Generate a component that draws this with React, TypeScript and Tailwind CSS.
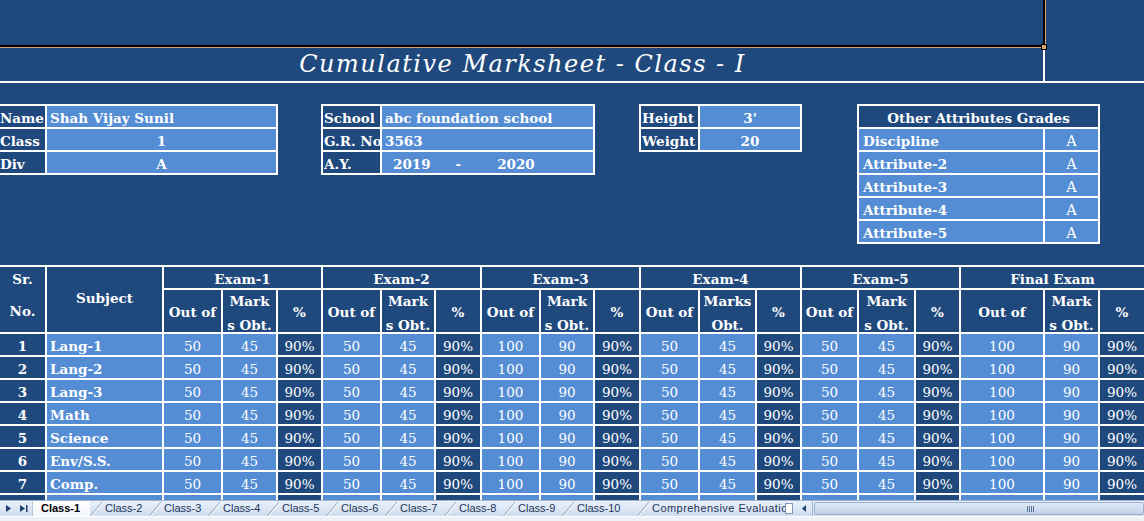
import React from "react";

const DARK = "bg-[#1F497D]";
const LIGHT = "bg-[#548DD4]";

type CP = { className?: string; children?: React.ReactNode };

function Cell({ className = "", children }: CP) {
  return (
    <div
      className={`h-[21px] overflow-hidden whitespace-nowrap leading-[21px] pt-[2px] ${className}`}
    >
      {children}
    </div>
  );
}

const subjects = ["Lang-1", "Lang-2", "Lang-3", "Math", "Science", "Env/S.S.", "Comp."];
const exams = [
  ["50", "45"],
  ["50", "45"],
  ["100", "90"],
  ["50", "45"],
  ["50", "45"],
  ["100", "90"],
];
const examNames = ["Exam-1", "Exam-2", "Exam-3", "Exam-4", "Exam-5", "Final Exam"];
const spanCls = [
  "col-start-3 col-span-3",
  "col-start-6 col-span-3",
  "col-start-9 col-span-3",
  "col-start-12 col-span-3",
  "col-start-15 col-span-3",
  "col-start-18 col-span-3",
];

function InfoTable({
  rows,
  cols,
  noLeft,
  className = "",
}: {
  rows: { label: string; value: React.ReactNode; vCls?: string; lCls?: string }[];
  cols: string;
  noLeft?: boolean;
  className?: string;
}) {
  return (
    <div
      className={`grid bg-white gap-[2px] pt-[2px] pr-[2px] pb-[2px] ${noLeft ? "" : "pl-[2px]"} ${cols} ${className}`}
    >
      {rows.map((r, i) => (
        <React.Fragment key={i}>
          <Cell className={`${DARK} font-bold ${r.lCls ?? ""}`}>{r.label}</Cell>
          <Cell className={`${LIGHT} font-bold ${r.vCls ?? ""}`}>{r.value}</Cell>
        </React.Fragment>
      ))}
    </div>
  );
}

function Slant() {
  return (
    <svg width="13" height="15" viewBox="0 0 13 15" className="shrink-0">
      <line x1="0.5" y1="15" x2="12" y2="1" stroke="#8a9cb8" strokeWidth="1" />
      <line x1="1.8" y1="15" x2="12.8" y2="1.6" stroke="#ffffff" strokeWidth="1" />
    </svg>
  );
}

export default function App() {
  const tabs = ["Class-2", "Class-3", "Class-4", "Class-5", "Class-6", "Class-7", "Class-8", "Class-9"];
  return (
    <div className="w-[1144px] h-[521px] overflow-hidden bg-[#1F497D] text-white font-['DejaVu_Serif','Liberation_Serif',serif] text-[13.5px] flex flex-col">
      <div className="h-[500px] flex flex-col shrink-0 overflow-hidden">
        {/* top band */}
        <div className="relative flex h-[48px] shrink-0">
          <div className="w-[1043px] flex flex-col">
            <div className="flex-1" />
            <div className="h-[2px] bg-black" />
            <div className="h-[1px] bg-[#D9A56B]" />
          </div>
          <div className="w-[2px] h-[47px] bg-black" />
          <div className="w-[1px] h-[45px] bg-[#D9A56B]" />
          <div className="absolute left-[1041px] top-[44px] w-[6px] h-[6px] border border-black bg-[#D9A56B]" />
        </div>
        {/* title */}
        <div className="flex h-[33px] shrink-0">
          <div className="w-[1043px] flex items-center justify-center">
            <span className="italic text-[24px] tracking-[1.5px] leading-[33px] font-['DejaVu_Serif',serif] pl-[2px]">
              Cumulative Marksheet - Class - I
            </span>
          </div>
          <div className="w-[2px] bg-white" />
          <div className="flex-1" />
        </div>
        <div className="h-[2px] bg-white shrink-0" />
        {/* info section */}
        <div className="h-[182px] shrink-0 flex items-start pt-[21px]">
          <InfoTable
            noLeft
            cols="grid-cols-[45px_229px]"
            rows={[
              { label: "Name", value: "Shah Vijay Sunil", vCls: "pl-[3px]" },
              { label: "Class", value: "1", vCls: "text-center" },
              { label: "Div", value: "A", vCls: "text-center" },
            ]}
          />
          <InfoTable
            className="ml-[43px]"
            cols="grid-cols-[57px_211px]"
            rows={[
              { label: "School", value: "abc foundation school", vCls: "pl-[3px]", lCls: "pl-[1px]" },
              { label: "G.R. No", value: "3563", vCls: "pl-[3px]", lCls: "pl-[1px]" },
              {
                label: "A.Y.",
                lCls: "pl-[1px]",
                value: (
                  <span className="flex pl-[11px]">
                    <span>2019</span>
                    <span className="ml-[25px]">-</span>
                    <span className="ml-[36px]">2020</span>
                  </span>
                ),
              },
            ]}
          />
          <InfoTable
            className="ml-[44px]"
            cols="grid-cols-[57px_100px]"
            rows={[
              { label: "Height", value: "3'", vCls: "text-center", lCls: "pl-[1px]" },
              { label: "Weight", value: "20", vCls: "text-center", lCls: "pl-[1px]" },
            ]}
          />
          <div className="ml-[55px] grid grid-cols-[184px_53px] bg-white gap-[2px] p-[2px]">
            <Cell className={`${DARK} font-bold col-span-2 text-center`}>Other Attributes Grades</Cell>
            {["Discipline", "Attribute-2", "Attribute-3", "Attribute-4", "Attribute-5"].map((a) => (
              <React.Fragment key={a}>
                <Cell className={`${LIGHT} font-bold pl-[4px]`}>{a}</Cell>
                <Cell className={`${LIGHT} text-center text-[14.5px]`}>A</Cell>
              </React.Fragment>
            ))}
          </div>
        </div>
        {/* main table */}
        <div className="flex-1 overflow-hidden">
          <div className="w-[1144px] grid bg-white gap-[2px] pt-[2px] grid-cols-[45px_115px_57px_53px_43px_57px_52px_44px_57px_52px_44px_57px_55px_43px_55px_55px_43px_82px_53px_44px] grid-rows-[21px_42px_repeat(8,21px)]">
            <div className={`${DARK} row-span-2 col-start-1 row-start-1 font-bold flex flex-col items-center justify-center leading-[20px] gap-[12px] pb-[10px]`}>
              <span>Sr.</span>
              <span>No.</span>
            </div>
            <div className={`${DARK} row-span-2 col-start-2 row-start-1 font-bold flex items-center justify-center pb-[3px]`}>
              Subject
            </div>
            {examNames.map((n, i) => (
              <Cell key={n} className={`${DARK} ${spanCls[i]} row-start-1 font-bold text-center`}>
                {n}
              </Cell>
            ))}
            {examNames.map((n, i) => (
              <React.Fragment key={n + "h"}>
                <div className={`${DARK} row-start-2 font-bold flex items-center justify-center pt-[2px] whitespace-nowrap overflow-hidden`}>
                  Out of
                </div>
                <div className={`${DARK} row-start-2 h-[42px] font-bold flex flex-col items-center justify-center leading-[24px] pt-[4px] whitespace-nowrap overflow-hidden`}>
                  {i === 3 ? (
                    <>
                      <span>Marks</span>
                      <span>Obt.</span>
                    </>
                  ) : (
                    <>
                      <span>Mark</span>
                      <span>s Obt.</span>
                    </>
                  )}
                </div>
                <div className={`${DARK} row-start-2 font-bold flex items-center justify-center pt-[3px]`}>%</div>
              </React.Fragment>
            ))}
            {subjects.map((s, r) => (
              <React.Fragment key={s}>
                <Cell className={`${DARK} font-bold text-center`}>{r + 1}</Cell>
                <Cell className={`${LIGHT} font-bold pl-[3px]`}>{s}</Cell>
                {exams.map((e, i) => (
                  <React.Fragment key={i}>
                    <Cell className={`${LIGHT} text-center`}>{e[0]}</Cell>
                    <Cell className={`${LIGHT} text-center`}>{e[1]}</Cell>
                    <Cell className={`${DARK} text-center`}>90%</Cell>
                  </React.Fragment>
                ))}
              </React.Fragment>
            ))}
            <Cell className={DARK} />
            <Cell className={LIGHT} />
            {exams.map((e, i) => (
              <React.Fragment key={"b" + i}>
                <Cell className={LIGHT} />
                <Cell className={LIGHT} />
                <Cell className={DARK} />
              </React.Fragment>
            ))}
          </div>
        </div>
      </div>
      {/* sheet tab bar */}
      <div className="h-[21px] shrink-0 flex flex-col font-['Liberation_Sans',Arial,sans-serif] text-[11px]">
        <div className="h-[16px] flex border-t border-[#9db3d0] bg-gradient-to-b from-[#eaf1fb] to-[#cfdcef]">
          <div className="w-[33px] shrink-0 flex items-center pl-[6px] gap-[9px] border-r border-[#b5c6de]">
            <svg width="5" height="7" viewBox="0 0 5 7">
              <path d="M0 0 L5 3.5 L0 7 Z" fill="#1d3f6e" />
            </svg>
            <svg width="8" height="7" viewBox="0 0 8 7">
              <path d="M0 0 L5 3.5 L0 7 Z" fill="#1d3f6e" />
              <rect x="6" y="0" width="1.5" height="7" fill="#1d3f6e" />
            </svg>
          </div>
          <div className="w-[752px] shrink-0 flex overflow-hidden">
            <div className="w-[57px] shrink-0 bg-gradient-to-b from-white to-[#f3f6fb] font-bold text-black pl-[8px] leading-[15px]">
              Class-1
            </div>
            {tabs.map((t) => (
              <div key={t} className="w-[59px] shrink-0 flex text-[#1e3556] leading-[15px]">
                <Slant />
                <span className="pl-[2px]">{t}</span>
              </div>
            ))}
            <div className="w-[75px] shrink-0 flex text-[#1e3556] leading-[15px]">
              <Slant />
              <span className="pl-[2px]">Class-10</span>
            </div>
            <div className="shrink-0 flex text-[#1e3556] leading-[15px] whitespace-nowrap">
              <Slant />
              <span className="pl-[2px] tracking-[0.45px]">Comprehensive Evaluation</span>
            </div>
          </div>
          <div className="w-[8px] shrink-0 bg-white border border-[#7f95b5] my-[2px]" />
          <div className="w-[18px] shrink-0 flex items-center justify-center ml-[2px] border-r border-[#9fb2cd]">
            <svg width="4" height="7" viewBox="0 0 4 7">
              <path d="M4 0 L0 3.5 L4 7 Z" fill="#1d3f6e" />
            </svg>
          </div>
          <div className="flex-1 flex items-center bg-gradient-to-b from-[#dde8f6] to-[#c0d2ea] border border-[#9fb2cd] rounded-[2px] my-[1px] ml-[1px] pl-[212px]">
            <div className="flex gap-[1px]">
              {[0, 1, 2, 3].map((k) => (
                <div key={k} className="w-[1px] h-[6px] bg-[#5a7294]" />
              ))}
            </div>
          </div>
        </div>
        <div className="flex-1 bg-[#eef1f5] border-t border-white" />
      </div>
    </div>
  );
}
